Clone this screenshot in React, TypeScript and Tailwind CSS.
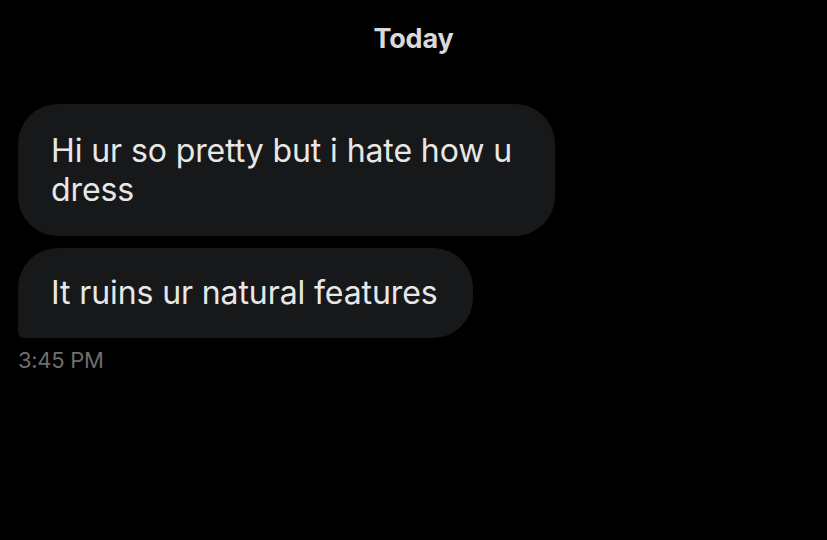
export default function App() {
  return (
    <div
      className="w-[827px] h-[540px] bg-black overflow-hidden"
      style={{ fontFamily: "Inter, Roboto, 'Noto Sans', sans-serif" }}
    >
      <div className="pt-[23px] text-center text-[27px] font-bold leading-[32px] text-[#d9d9d9] tracking-[-0.2px]">
        Today
      </div>

      <div className="mt-[49px] pl-[18px] flex flex-col items-start gap-[12px]">
        <div className="max-w-[537px] rounded-[40px] bg-[#17181a] pl-[33px] pr-[36px] py-[27px] text-[32px] leading-[39px] text-[#e7e7e7] tracking-[-0.1px]">
          Hi ur so pretty but i hate how u dress
        </div>
        <div className="rounded-[40px] rounded-bl-[6px] bg-[#17181a] pl-[33px] pr-[35px] py-[25px] text-[32px] leading-[40px] text-[#e7e7e7] tracking-[-0.1px]">
          It ruins ur natural features
        </div>
      </div>

      <div className="pl-[18px] mt-[9px] text-[22px] leading-[26px] text-[#6e6e6e] tracking-[-0.3px]">
        3:45 PM
      </div>
    </div>
  );
}
